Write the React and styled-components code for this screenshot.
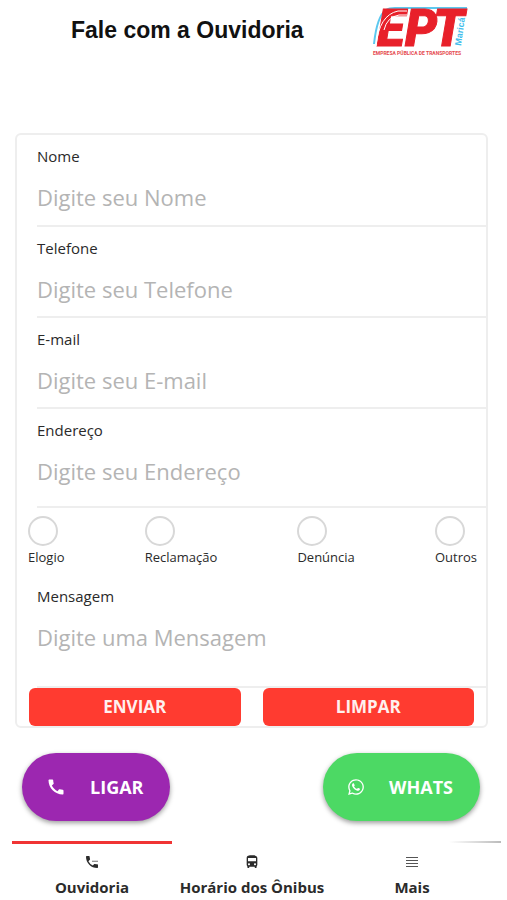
import React from "react";
import styled, { createGlobalStyle } from "styled-components";
import { MdCall, MdDirectionsBus } from "react-icons/md";
import { FaWhatsapp } from "react-icons/fa";

const Global = createGlobalStyle`
  * { box-sizing: border-box; }
  body { margin: 0; background: #fff; }
`;

const Page = styled.div`
  display: flex;
  flex-direction: column;
  min-height: 100vh;
  padding: 0 6px 0 12px;
  font-family: "Open Sans", "Noto Sans", sans-serif;
  color: #2a2a2a;
`;

const Header = styled.header`
  display: flex;
  align-items: flex-start;
  justify-content: space-between;
  height: 133px;
  padding: 6px 32px 0 59px;
`;

const Title = styled.h1`
  margin: 0;
  padding-top: 10px;
  font: bold 23px/28px "Liberation Sans", Arial, sans-serif;
  color: #111;
`;

const LogoArt = styled.svg`
  flex: none;
  overflow: visible;
`;

const Card = styled.form`
  margin: 0 13px 0 3px;
  border: 2px solid #eee;
  border-radius: 6px;
`;

const Field = styled.div`
  display: flex;
  flex-direction: column;
  height: ${(p) => p.$height || 91}px;
  margin-left: 20px;
  padding-top: 11px;
  border-bottom: 2px solid #eee;
`;

const FieldLabel = styled.label`
  font-size: 15px;
  line-height: 20px;
`;

const inputStyle = `
  display: block;
  width: 100%;
  margin: 0;
  padding: 0;
  border: 0;
  outline: 0;
  background: transparent;
  font-family: inherit;
  font-size: 22px;
  line-height: 32px;
  color: #333;
  &::placeholder { color: #b4b4b4; opacity: 1; }
`;

const TextInput = styled.input`
  ${inputStyle}
  height: 32px;
  margin-top: 15px;
`;

const MessageInput = styled.textarea`
  ${inputStyle}
  height: 64px;
  margin-top: 15px;
  resize: none;
`;

const Options = styled.fieldset`
  display: flex;
  justify-content: space-between;
  margin: 0;
  padding: 8px 9px 8px 11px;
  border: 0;
`;

const Option = styled.label`
  display: flex;
  flex-direction: column;
  gap: 1px;
  font-size: 13px;
  line-height: 20px;
`;

const Radio = styled.input`
  appearance: none;
  width: 30px;
  height: 30px;
  margin: 0;
  border: 2px solid #d8d8d8;
  border-radius: 50%;
  &:checked { border: 9px solid #ff3b30; }
`;

const FormActions = styled.div`
  display: grid;
  grid-template-columns: 1fr 1fr;
  gap: 22px;
  padding: 0 12px;
`;

const FormButton = styled.button`
  height: 38px;
  border: 0;
  border-radius: 6px;
  background: #ff3b30;
  color: #fff0ee;
  font: 700 17px/24px "Open Sans", "Noto Sans", sans-serif;
`;

const Contacts = styled.div`
  display: flex;
  justify-content: space-between;
  padding: 25px 21px 0 10px;
`;

const Pill = styled.a`
  display: flex;
  align-items: center;
  gap: 24px;
  height: 68px;
  padding: 0 27px 0 24px;
  border-radius: 34px;
  background: ${(p) => p.$color};
  box-shadow: 0 2px 5px rgba(0, 0, 0, 0.4);
  color: #fff;
  font-size: 18px;
  font-weight: 700;
  text-decoration: none;
  svg { flex: none; }
`;

const Tabs = styled.nav`
  display: grid;
  grid-template-columns: 1fr 1fr 1fr;
  margin-top: 20px;
  padding-right: 9px;
  background: linear-gradient(to right, transparent, #bbb) top right / 52px 2px no-repeat;
`;

const Tab = styled.a`
  display: flex;
  flex-direction: column;
  align-items: center;
  gap: 6px;
  padding-top: 10px;
  border-top: 3px solid ${(p) => (p.$active ? "#f03434" : "transparent")};
  color: #2b2b2b;
  font-size: 15px;
  font-weight: 700;
  line-height: 22px;
  text-decoration: none;
  white-space: nowrap;
`;

function Logo() {
  return (
    <LogoArt width="96" height="52" viewBox="0 0 96 52" role="img" aria-label="EPT Maricá">
      <path d="M1 38 Q4 10 13 4 Q16 2 22 2 H94" fill="none" stroke="#5cc8ef" strokeWidth="2" />
      <g fill="#e8202a" stroke="#e8202a" strokeWidth="1" fontFamily="Roboto, sans-serif" fontWeight="900" fontStyle="italic" fontSize="51">
        <text x="4" y="40">E</text>
        <text x="32" y="40">P</text>
        <text x="60" y="40">T</text>
      </g>
      <path d="M3 40 Q6 9 25 5 H34 M11 24 Q14 11 26 9 H34" fill="none" stroke="#fff" strokeWidth="1" />
      <text transform="translate(88 40) rotate(-82)" fill="#42bdec" fontFamily="Liberation Sans, sans-serif" fontWeight="700" fontSize="9">Maricá</text>
      <text x="0" y="49" fill="#e5484d" fontFamily="Roboto, sans-serif" fontWeight="700" fontSize="5">EMPRESA PÚBLICA DE TRANSPORTES</text>
    </LogoArt>
  );
}

function PhoneLineIcon() {
  return (
    <svg width="16" height="16" viewBox="0 0 24 24" fill="currentColor" aria-hidden="true">
      <path d="M20 15.500c-1.250 0-2.450-.2-3.570-.57a1 1 0 0 0-1.020.24l-2.200 2.200a15.050 15.050 0 0 1-6.590-6.590l2.200-2.200a1 1 0 0 0 .25-1.020A11.400 11.400 0 0 1 8.500 4a1 1 0 0 0-1-1H4a1 1 0 0 0-1 1c0 9.390 7.610 17 17 17a1 1 0 0 0 1-1v-3.500a1 1 0 0 0-1-1z" />
      <path d="M12 10h9v2h-9z" opacity=".5" />
    </svg>
  );
}

function MenuIcon() {
  return (
    <svg width="16" height="16" viewBox="0 0 16 16" fill="none" stroke="#555" aria-hidden="true">
      <path d="M2 3.500h12M2 6.500h12M2 9.500h12M2 12.500h12" />
    </svg>
  );
}

const fields = [
  { id: "nome", label: "Nome", hint: "Digite seu Nome", type: "text", height: 92 },
  { id: "telefone", label: "Telefone", hint: "Digite seu Telefone", type: "tel" },
  { id: "email", label: "E-mail", hint: "Digite seu E-mail", type: "email" },
  { id: "endereco", label: "Endereço", hint: "Digite seu Endereço", type: "text", height: 99 },
];

export default function App() {
  return (
    <Page>
      <Global />
      <Header>
        <Title>Fale com a Ouvidoria</Title>
        <Logo />
      </Header>
      <Card onSubmit={(e) => e.preventDefault()}>
        {fields.map((f) => (
          <Field key={f.id} $height={f.height}>
            <FieldLabel htmlFor={f.id}>{f.label}</FieldLabel>
            <TextInput id={f.id} type={f.type} placeholder={f.hint} />
          </Field>
        ))}
        <Options aria-label="Tipo de mensagem">
          {["Elogio", "Reclamação", "Denúncia", "Outros"].map((o) => (
            <Option key={o}>
              <Radio type="radio" name="tipo" value={o} />
              {o}
            </Option>
          ))}
        </Options>
        <Field $height={113}>
          <FieldLabel htmlFor="mensagem">Mensagem</FieldLabel>
          <MessageInput id="mensagem" placeholder="Digite uma Mensagem" />
        </Field>
        <FormActions>
          <FormButton type="submit">ENVIAR</FormButton>
          <FormButton type="reset">LIMPAR</FormButton>
        </FormActions>
      </Card>
      <Contacts>
        <Pill href="#ligar" $color="#9c27b0"><MdCall size={20} />LIGAR</Pill>
        <Pill href="#whats" $color="#4cd964"><FaWhatsapp size={18} />WHATS</Pill>
      </Contacts>
      <Tabs>
        <Tab href="#ouvidoria" $active><PhoneLineIcon />Ouvidoria</Tab>
        <Tab href="#horarios"><MdDirectionsBus size={16} />Horário dos Ônibus</Tab>
        <Tab href="#mais"><MenuIcon />Mais</Tab>
      </Tabs>
    </Page>
  );
}
